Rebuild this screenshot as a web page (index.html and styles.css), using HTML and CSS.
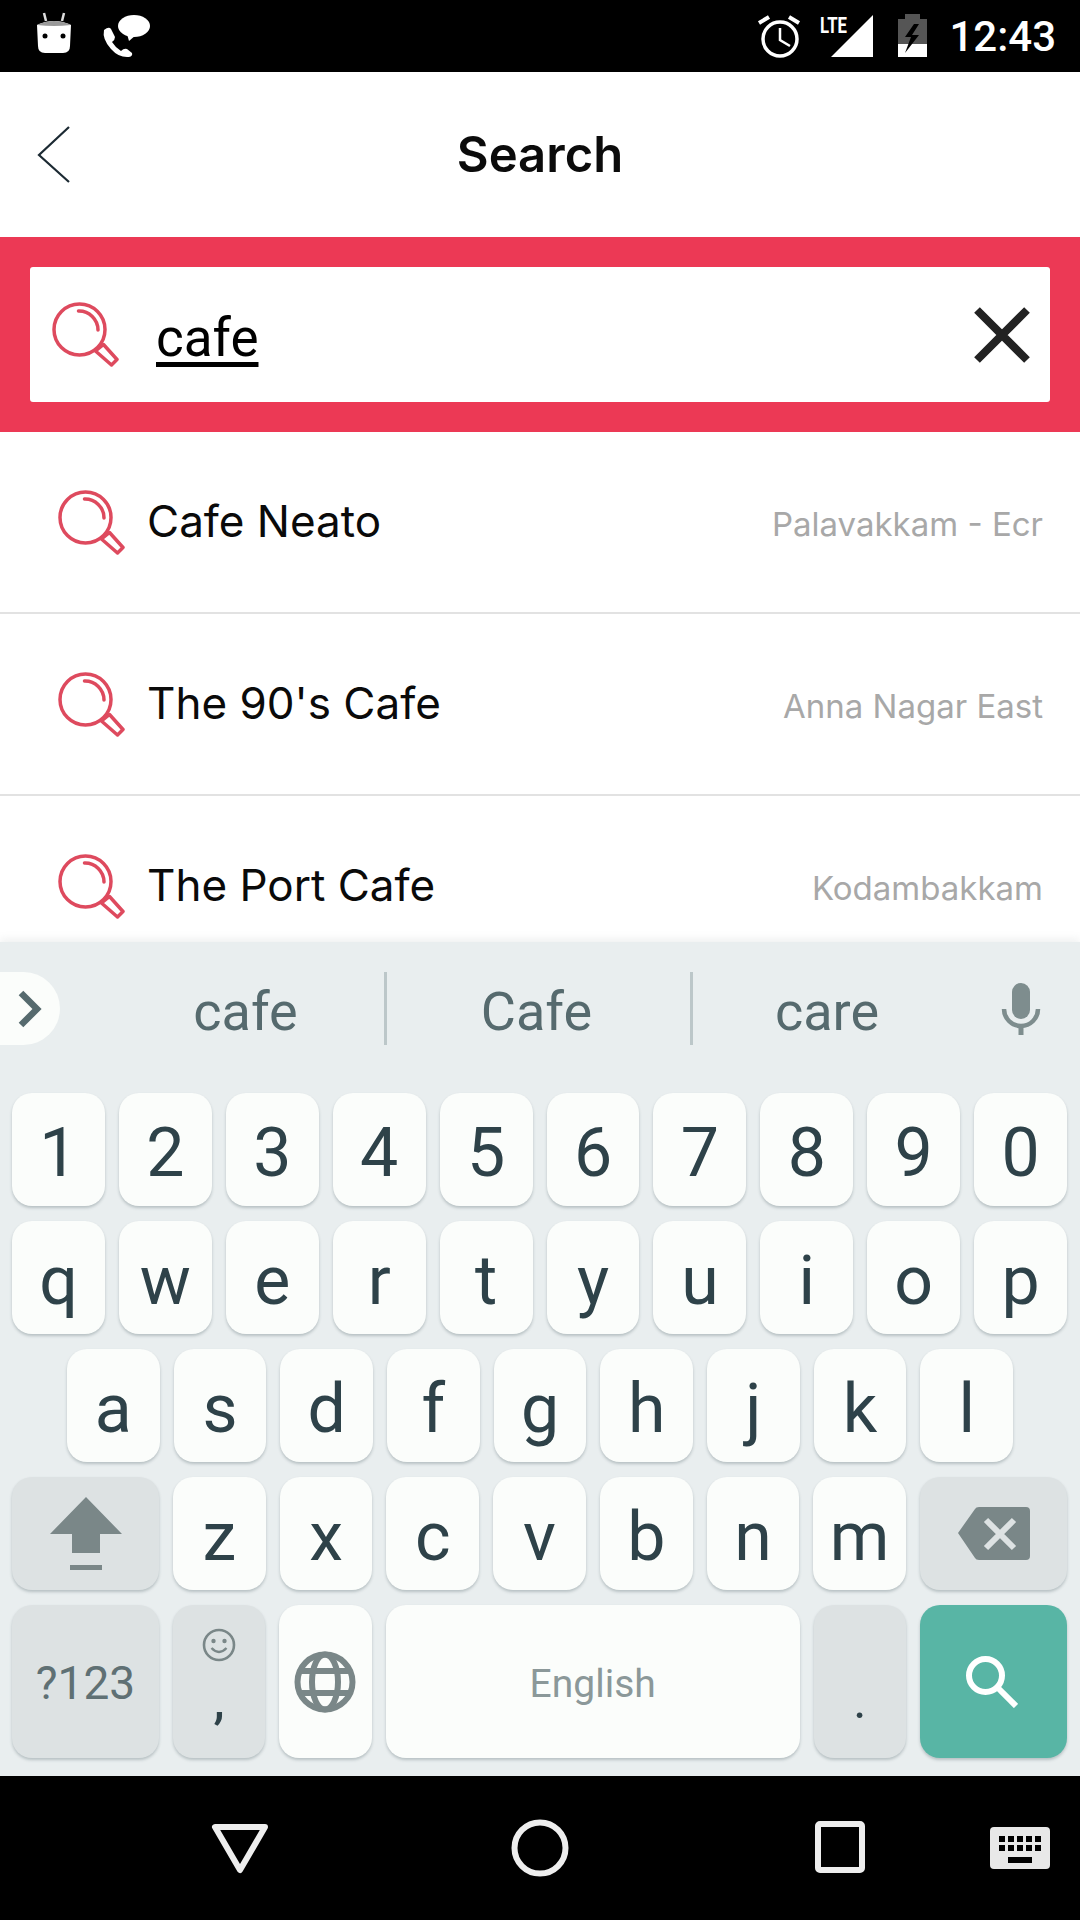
FILE: index.html
```html
<!DOCTYPE html>
<html lang="en">
<head>
  <meta charset="UTF-8">
  <title>Search</title>
  <link rel="stylesheet" href="styles.css">
</head>
<body>
  <svg class="defs" width="0" height="0">
    <symbol id="lens" viewBox="0 0 67 65">
      <circle cx="27.5" cy="27.5" r="25.5" fill="none" stroke="#de4a5e" stroke-width="3.5"/>
      <path d="M26.5 9 A19 19 0 0 1 46 28" fill="none" stroke="#de4a5e" stroke-width="3.5" stroke-linecap="round"/>
      <path d="M43.5 49 L51.5 42.5 L65 57.5 L59.5 63 Z" fill="none" stroke="#de4a5e" stroke-width="3.5" stroke-linejoin="round"/>
    </symbol>
  </svg>

  <div class="screen">
    <div class="status">
      <svg class="st-android" width="36" height="72" viewBox="0 0 36 72">
        <path d="M8 13 L10 21 M28 13 L26 21" stroke="#ddd" stroke-width="2.5"/>
        <path d="M1 25 Q18 17 35 25 L34 46 Q34 53 27 53 L9 53 Q2 53 2 46 Z" fill="#fff"/>
        <path d="M1 25 Q18 17 35 25 Q18 27 1 25 Z" fill="#999"/>
        <circle cx="9" cy="36" r="2.5" fill="#000"/>
        <circle cx="27" cy="36" r="2.5" fill="#000"/>
      </svg>
      <svg width="48" height="72" viewBox="0 0 48 72">
        <path d="M2 30 Q7 26 9 29 L13 37 Q13 40 10 42 Q13 47 19 51 Q22 48 25 49 L30 53 Q31 56 27 57 Q17 58 9 49 Q0 39 2 30 Z" fill="#fff"/>
        <ellipse cx="32" cy="26" rx="16" ry="11" fill="#fff"/>
        <path d="M25 34 L27 41 L34 35 Z" fill="#fff"/>
      </svg>
      <div class="status-right">
        <svg width="44" height="72" viewBox="0 0 44 72">
          <path d="M2 23 L12 17 M32 17 L42 23" stroke="#fff" stroke-width="4" fill="none"/>
          <circle cx="23" cy="39" r="17" fill="none" stroke="#fff" stroke-width="3.5"/>
          <path d="M23 28 V40 L33 46" stroke="#fff" stroke-width="2.5" fill="none"/>
        </svg>
        <svg width="56" height="72" viewBox="0 0 56 72">
          <path d="M12 57 H54 V15 Z" fill="#fff"/>
          <text class="lte" x="1" y="33" textLength="27" lengthAdjust="spacingAndGlyphs">LTE</text>
        </svg>
        <svg width="38" height="72" viewBox="0 0 38 72">
          <path d="M5 19 H12 V14 H27 V19 H34 V44 H5 Z" fill="#555"/>
          <rect x="5" y="44" width="29" height="13" fill="#fff"/>
          <path d="M21 24 L12 37 H18 L12 53 L26 35 H19 L26 24 Z" fill="#000"/>
        </svg>
        <span class="time">12:43</span>
      </div>
    </div>

    <div class="header">
      <svg class="back" width="34" height="60" viewBox="0 0 34 60">
        <path d="M32 2 L2 30 L32 57" fill="none" stroke="#1c2a33" stroke-width="2.2"/>
      </svg>
      <h1>Search</h1>
    </div>

    <div class="search-bar">
      <div class="search-input">
        <svg class="lens" width="67" height="65"><use href="#lens"/></svg>
        <span class="query">cafe</span>
        <svg class="clear" width="56" height="56" viewBox="0 0 56 56">
          <path d="M3 3 L53 53 M53 3 L3 53" stroke="#222" stroke-width="8"/>
        </svg>
      </div>
    </div>

    <div class="results">
      <div class="result">
        <svg class="lens" width="67" height="65"><use href="#lens"/></svg>
        <span class="name">Cafe Neato</span>
        <span class="area">Palavakkam - Ecr</span>
      </div>
      <div class="result">
        <svg class="lens" width="67" height="65"><use href="#lens"/></svg>
        <span class="name">The 90's Cafe</span>
        <span class="area">Anna Nagar East</span>
      </div>
      <div class="result">
        <svg class="lens" width="67" height="65"><use href="#lens"/></svg>
        <span class="name">The Port Cafe</span>
        <span class="area">Kodambakkam</span>
      </div>
    </div>

    <div class="keyboard">
      <div class="suggestions">
        <div class="pill">
          <svg width="28" height="40" viewBox="0 0 28 40">
            <path d="M5 4 L21 20 L5 36" fill="none" stroke="#566a6e" stroke-width="6.5"/>
          </svg>
        </div>
        <span class="word word-a">cafe</span>
        <span class="word word-b">Cafe</span>
        <span class="word word-c">care</span>
        <svg class="mic" width="40" height="52" viewBox="0 0 40 52">
          <rect x="11" y="0" width="18" height="36" rx="9" fill="#7e8d8e"/>
          <path d="M3 26 A17 17 0 0 0 37 26" fill="none" stroke="#7e8d8e" stroke-width="4.5"/>
          <rect x="17.5" y="42" width="5" height="10" fill="#7e8d8e"/>
        </svg>
      </div>

      <div class="rows">
        <div class="row">
          <div class="key">1</div><div class="key">2</div><div class="key">3</div><div class="key">4</div><div class="key">5</div>
          <div class="key">6</div><div class="key">7</div><div class="key">8</div><div class="key">9</div><div class="key">0</div>
        </div>
        <div class="row">
          <div class="key">q</div><div class="key">w</div><div class="key">e</div><div class="key">r</div><div class="key">t</div>
          <div class="key">y</div><div class="key">u</div><div class="key">i</div><div class="key">o</div><div class="key">p</div>
        </div>
        <div class="row row-home">
          <div class="key">a</div><div class="key">s</div><div class="key">d</div><div class="key">f</div><div class="key">g</div>
          <div class="key">h</div><div class="key">j</div><div class="key">k</div><div class="key">l</div>
        </div>
        <div class="row">
          <div class="key wide dark">
            <svg width="72" height="73" viewBox="0 0 72 73">
              <path d="M36 0 L72 37 H50 V56 H22 V37 H0 Z" fill="#7a8788"/>
              <rect x="20" y="68" width="32" height="5" fill="#7a8788"/>
            </svg>
          </div>
          <div class="key">z</div><div class="key">x</div><div class="key">c</div><div class="key">v</div>
          <div class="key">b</div><div class="key">n</div><div class="key">m</div>
          <div class="key wide dark">
            <svg width="72" height="53" viewBox="0 0 72 53">
              <path d="M0 26 L17 2 Q18 0 21 0 H68 Q72 0 72 4 V49 Q72 53 68 53 H21 Q18 53 17 51 Z" fill="#7a8788"/>
              <path d="M28 13 L56 41 M56 13 L28 41" stroke="#dde2e3" stroke-width="6"/>
            </svg>
          </div>
        </div>
        <div class="row row-last">
          <div class="key wide dark symbols">?123</div>
          <div class="key dark comma">
            <svg width="34" height="34" viewBox="0 0 34 34">
              <circle cx="17" cy="17" r="15" fill="none" stroke="#7a8788" stroke-width="2.6"/>
              <circle cx="11.5" cy="13" r="2.2" fill="#7a8788"/>
              <circle cx="22.5" cy="13" r="2.2" fill="#7a8788"/>
              <path d="M9.5 20 Q17 28 24.5 20" fill="none" stroke="#7a8788" stroke-width="2.4"/>
            </svg>
            <span>,</span>
          </div>
          <div class="key globe">
            <svg width="62" height="62" viewBox="0 0 62 62">
              <g fill="none" stroke="#7a8788" stroke-width="6">
                <circle cx="31" cy="31" r="27.5"/>
                <ellipse cx="31" cy="31" rx="13" ry="27.5"/>
                <path d="M6 20 H56 M6 42 H56"/>
              </g>
            </svg>
          </div>
          <div class="key space">English</div>
          <div class="key dark period">.</div>
          <div class="key wide go">
            <svg width="52" height="52" viewBox="0 0 52 52">
              <circle cx="19.5" cy="19.5" r="16.5" fill="none" stroke="#fff" stroke-width="6"/>
              <path d="M31 31 L50 50" stroke="#fff" stroke-width="6"/>
            </svg>
          </div>
        </div>
      </div>
    </div>

    <div class="nav">
      <svg width="60" height="54" viewBox="0 0 60 54">
        <path d="M5 6 H55 L30 49 Z" fill="none" stroke="#eee" stroke-width="6" stroke-linejoin="round"/>
      </svg>
      <svg width="60" height="60" viewBox="0 0 60 60">
        <circle cx="30" cy="30" r="25.5" fill="none" stroke="#eee" stroke-width="6"/>
      </svg>
      <svg width="60" height="54" viewBox="0 0 60 54">
        <rect x="8" y="3" width="44" height="46" rx="2" fill="none" stroke="#eee" stroke-width="6"/>
      </svg>
      <svg class="nav-kbd" width="60" height="42" viewBox="0 0 60 42">
        <rect width="60" height="42" rx="4" fill="#e8e8e8"/>
        <path d="M9 9 h6 v6 h-6z M18 9 h6 v6 h-6z M27 9 h6 v6 h-6z M36 9 h6 v6 h-6z M45 9 h6 v6 h-6z M9 18 h6 v6 h-6z M18 18 h6 v6 h-6z M27 18 h6 v6 h-6z M36 18 h6 v6 h-6z M45 18 h6 v6 h-6z M18 30 h24 v6 h-24z" fill="#000"/>
      </svg>
    </div>
  </div>
</body>
</html>
```

FILE: styles.css
```css
body { margin: 0; background: #fff; font-family: "Roboto", sans-serif; }
.defs { display: block; }
.screen { width: 1080px; height: 1920px; display: flex; flex-direction: column; overflow: hidden; }

.status { height: 72px; flex: none; background: #000; display: flex; padding: 0 24px 0 36px; gap: 30px; }
.status svg { display: block; }
.status-right { margin-left: auto; display: flex; align-items: center; gap: 18px; }
.lte { font: 700 22px "Roboto", sans-serif; fill: #fff; }
.time { color: #fff; font-size: 42px; font-weight: 500; }

.header { height: 165px; flex: none; display: grid; grid-template-columns: 1fr auto 1fr; align-items: center; }
.back { margin-left: 37px; }
.header h1 { margin: 0; font: 600 49px "Inter", sans-serif; color: #0b0b0b; }

.search-bar { height: 195px; flex: none; box-sizing: border-box; padding: 30px; background: #ec3955; }
.search-input { height: 135px; display: flex; align-items: center; background: #fff; border-radius: 3px; padding: 0 20px 0 22px; }
.query { margin-left: 37px; padding-top: 6px; font-size: 53px; color: #000; text-decoration: underline; text-decoration-thickness: 5px; text-underline-offset: 6px; }
.clear { margin-left: auto; }

.results { flex: 1; min-height: 0; overflow: hidden; }
.result { height: 182px; box-sizing: border-box; border-bottom: 2px solid #e2e2e2; display: flex; align-items: center; padding: 0 37px 0 58px; gap: 22px; }
.name { padding-bottom: 3px; font: 400 44px "Inter", sans-serif; color: #0a0a0a; }
.area { margin-left: auto; padding-top: 4px; font: 400 33px "Inter", sans-serif; color: #a8a8a8; }

.keyboard { flex: none; height: 834px; box-sizing: border-box; background: #e9eeef; box-shadow: 0 -3px 8px rgba(120, 130, 130, .12); }

.suggestions { height: 73px; margin-top: 30px; display: flex; align-items: center; }
.pill { width: 60px; height: 73px; background: #fbfdfb; border-radius: 0 37px 37px 0; display: flex; align-items: center; justify-content: flex-end; box-sizing: border-box; }
.pill svg { margin-right: 16px; }
.word { height: 73px; box-sizing: border-box; line-height: 79px; text-align: center; font-size: 54px; color: #566a6e; }
.word-a { width: 280px; margin-left: 47px; border-right: 3px solid #bcc7c9; }
.word-b { width: 306px; padding-right: 4px; border-right: 3px solid #bcc7c9; }
.word-c { width: 268px; }
.mic { margin-left: 40px; margin-top: 1px; }

.rows { margin-top: 48px; padding: 0 13px 0 12px; display: flex; flex-direction: column; gap: 15px; }
.row { height: 113px; display: flex; gap: 14px; }
.row-home { padding: 0 54px 0 55px; }
.row-last { height: 153px; }

.key { flex: 1 1 0; box-sizing: border-box; padding-top: 7px; background: #fbfdfb; border-radius: 20px; box-shadow: 0 2px 3px rgba(70, 90, 95, .3); display: flex; align-items: center; justify-content: center; font-size: 68px; color: #2e4249; }
.key svg { display: block; }
.key.wide { flex: 0 0 147px; padding-top: 0; }
.key.dark { background: #dde2e3; }
.key.globe { padding-top: 0; }
.key.space { flex: 0 0 414px; font-size: 39px; color: #8b9899; padding-top: 4px; }
.key.go { background: #58b5a5; padding-right: 3px; }
.key.symbols { font-size: 46px; color: #5f7074; padding-top: 2px; }
.key.comma { flex-direction: column; justify-content: flex-start; padding-top: 23px; font-size: 50px; line-height: 50px; font-weight: 500; }
.key.comma span { margin-top: 14px; }
.key.period { align-items: flex-end; padding: 0 0 32px; font-size: 50px; line-height: 50px; }

.nav { flex: none; height: 144px; background: #000; display: flex; align-items: center; gap: 240px; padding-left: 210px; }
.nav svg { display: block; }
.nav-kbd { margin-left: -120px; }
```
